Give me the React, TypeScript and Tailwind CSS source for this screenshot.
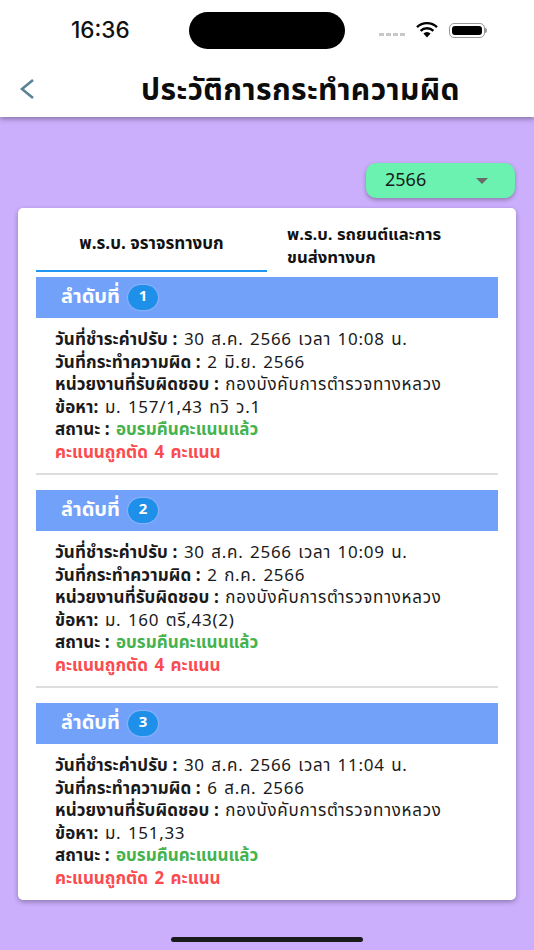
const font = { fontFamily: '"Noto Sans Thai","Noto Sans","Liberation Sans",sans-serif' };

const sections = [
  { n: 1, paid: "30 ส.ค. 2566 เวลา 10:08 น.", date: "2 มิ.ย. 2566", charge: "ม. 157/1,43 ทวิ ว.1", pts: 4 },
  { n: 2, paid: "30 ส.ค. 2566 เวลา 10:09 น.", date: "2 ก.ค. 2566", charge: "ม. 160 ตรี,43(2)", pts: 4 },
  { n: 3, paid: "30 ส.ค. 2566 เวลา 11:04 น.", date: "6 ส.ค. 2566", charge: "ม. 151,33", pts: 2 },
];

function Row({ label, value }: { label: string; value: string }) {
  return (
    <div className="h-[22.5px] leading-[22.5px] whitespace-nowrap">
      <span className="font-bold tracking-[0.1px]">{label}</span>{" "}
      <span className="tracking-[0.7px] [word-spacing:1.5px] ml-[2px]">{value}</span>
    </div>
  );
}

function Section({ s, last }: { s: (typeof sections)[number]; last: boolean }) {
  return (
    <div className={last ? "" : "h-[213px]"}>
      <div className="h-[41px] bg-[#72a1fa] flex items-center pl-[25px] gap-[8px]">
        <span className="text-white font-bold text-[20px] leading-[41px]">ลำดับที่</span>
        <span className="w-[30px] h-[25px] rounded-full bg-[#1e90ea] shadow-[0_0_2px_rgba(255,255,255,0.6)] text-white text-[15px] font-bold flex items-center justify-center">{s.n}</span>
      </div>
      <div className="pl-[19px] pt-[11px] text-[17px] text-[#1a1a1a]">
        <Row label="วันที่ชำระค่าปรับ :" value={s.paid} />
        <Row label="วันที่กระทำความผิด :" value={s.date} />
        <Row label="หน่วยงานที่รับผิดชอบ :" value="กองบังคับการตำรวจทางหลวง" />
        <Row label="ข้อหา:" value={s.charge} />
        <div className="h-[22.5px] leading-[22.5px] whitespace-nowrap">
          <span className="font-bold">สถานะ :</span>{" "}
          <span className="font-bold text-[#45b24e] ml-[2px]">อบรมคืนคะแนนแล้ว</span>
        </div>
        <div className="h-[22.5px] leading-[22.5px] whitespace-nowrap font-bold text-[#fb4b4f] [word-spacing:2px]">คะแนนถูกตัด {s.pts} คะแนน</div>
      </div>
      {!last && <div className="h-[2px] bg-[#dddddd] mt-[9px]" />}
    </div>
  );
}

export default function App() {
  return (
    <div className="w-[534px] h-[950px] bg-[#cbaefc] relative overflow-hidden" style={font}>
      <header className="h-[117px] bg-white shadow-[0_2px_5px_rgba(0,0,0,0.35)] relative">
        <div className="h-[60px] flex items-start relative">
          <span className="absolute left-[71px] top-[17px] text-[22.5px] font-medium text-[#111] leading-[26px] font-['Inter',sans-serif]">16:36</span>
          <div className="absolute left-[189px] top-[12px] w-[156px] h-[37px] rounded-full bg-black" />
          <div className="absolute left-[379px] top-[33px] flex gap-[2px]">
            {[0, 1, 2, 3].map((i) => <span key={i} className="w-[5px] h-[3px] bg-[#c8c8c8]" />)}
          </div>
          <svg className="absolute left-[415px] top-[21px]" width="24" height="17" viewBox="0 0 24 17">
            <path d="M12 16.5 8.4 12.6a5 5 0 0 1 7.2 0Z" fill="#000" />
            <path d="M5.6 9.8a9.2 9.2 0 0 1 12.8 0" fill="none" stroke="#000" strokeWidth="2.4" />
            <path d="M2 6.2a14.4 14.4 0 0 1 20 0" fill="none" stroke="#000" strokeWidth="2.4" />
          </svg>
          <div className="absolute left-[449px] top-[23px] w-[36px] h-[15px] rounded-[5px] border border-[#999] p-[2px]">
            <div className="w-full h-full rounded-[3px] bg-black" />
          </div>
          <div className="absolute left-[485px] top-[28px] w-[2px] h-[5px] rounded-r bg-[#999]" />
        </div>
        <svg className="absolute left-[19px] top-[78px]" width="17" height="22" viewBox="0 0 17 22">
          <path d="M14 2 3 11l11 9" fill="none" stroke="#5b8296" strokeWidth="2.6" />
        </svg>
        <h1 className="absolute left-[141px] top-[71px] text-[30px] tracking-[0.4px] font-bold text-[#0c0c0c] leading-[40px] whitespace-nowrap">ประวัติการกระทำความผิด</h1>
      </header>
      <main className="pl-[18px] pr-[18px]">
        <div className="flex justify-end pt-[46px] pr-[1px]">
          <div className="w-[149px] h-[35px] rounded-[10px] bg-[#6bf2b0] shadow-[0_2px_4px_rgba(0,0,0,0.3)] flex items-center justify-between pl-[19px] pr-[27px]">
            <span className="text-[18px] text-[#1a1a1a]">2566</span>
            <span className="w-0 h-0 border-x-[6px] border-x-transparent border-t-[6px] border-t-[#6a6a6a]" />
          </div>
        </div>
        <div className="mt-[10px] h-[692px] bg-white rounded-[5px] shadow-[0_2px_5px_rgba(0,0,0,0.3)] px-[18px]">
          <div className="flex h-[64px] pt-[12px]">
            <div className="w-[231px] h-[52px] border-b-2 border-[#2196f3] flex items-center justify-center font-bold text-[17px] text-[#111]">พ.ร.บ. จราจรทางบก</div>
            <div className="w-[230px] h-[52px] pl-[20px] font-bold text-[16.7px] leading-[22.5px] text-[#111] pt-[4px]">พ.ร.บ. รถยนต์และการ<br />ขนส่งทางบก</div>
          </div>
          <div className="pt-[5px]">
            {sections.map((s, i) => <Section key={s.n} s={s} last={i === 2} />)}
          </div>
        </div>
      </main>
      <div className="absolute left-[171px] top-[937px] w-[192px] h-[5px] rounded-full bg-[#1b1b1b]" />
    </div>
  );
}
